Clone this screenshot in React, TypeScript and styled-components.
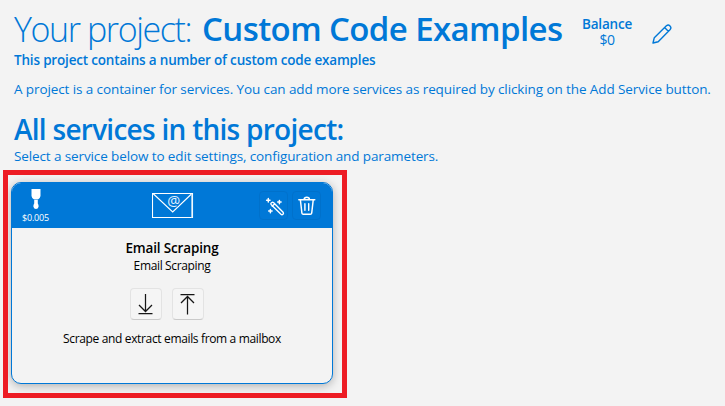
import React from "react";
import styled, { createGlobalStyle } from "styled-components";

const GlobalStyle = createGlobalStyle`
  * { box-sizing: border-box; }
  body { margin: 0; background: #f3f3f3; overflow: hidden; }
`;

const blue = "#0078d7";

const Page = styled.main`
  width: 725px;
  height: 406px;
  padding-top: 6px;
  background: #f3f3f3;
  color: ${blue};
  font-family: "Open Sans", "Noto Sans", sans-serif;
  white-space: nowrap;
`;

const TitleBar = styled.header`
  display: flex;
  height: 45px;
  padding-left: 14px;
`;

const Title = styled.h1`
  display: flex;
  margin: 0;
  font-size: 34px;
  line-height: 46px;
`;

const TitleLabel = styled.span`
  width: 188px;
  font-weight: 300;
  letter-spacing: -1.4px;
`;

const TitleName = styled.span`
  width: 366px;
  font-size: 33px;
  font-weight: 600;
  letter-spacing: -0.6px;
`;

const Balance = styled.div`
  width: 50px;
  margin-left: 14px;
  padding-top: 10px;
  text-align: center;
  font-size: 13.5px;
  line-height: 16px;
  letter-spacing: -0.2px;
`;

const BalanceLabel = styled.div`
  font-weight: 600;
`;

const BalanceValue = styled.div`
  font-size: 14px;
  letter-spacing: -0.4px;
`;

const EditButton = styled.button`
  width: 20px;
  height: 20px;
  margin: 18px 0 0 20px;
  padding: 0;
  border: 0;
  background: none;
  color: ${blue};
`;

const Line = styled.p<{ $height: number; $weight?: number; $spacing?: number }>`
  margin: 0;
  padding-left: 14px;
  height: ${(p) => p.$height}px;
  font-size: 13.5px;
  font-weight: ${(p) => p.$weight ?? 400};
  letter-spacing: ${(p) => p.$spacing ?? 0}px;
  line-height: 18px;
`;

const SectionTitle = styled.h2`
  margin: 0;
  padding-left: 14px;
  height: 38px;
  font-size: 28px;
  font-weight: 600;
  line-height: 40px;
  letter-spacing: -0.73px;
`;

const Highlight = styled.section`
  width: 344px;
  height: 228px;
  margin: 4px 0 0 3px;
  padding: 7px 9px 9px 3px;
  border: 5px solid #ed1c24;
  overflow: hidden;
`;

const Card = styled.article`
  width: 322px;
  height: 202px;
  border: 1px solid ${blue};
  border-radius: 10px;
  background: #f3f3f3;
  box-shadow: 0 2px 10px rgba(0, 0, 0, 0.28);
  color: #000;
  overflow: hidden;
`;

const CardHeader = styled.div`
  display: grid;
  grid-template-columns: 46px 1fr 73px;
  height: 45px;
  background: ${blue};
  color: #fff;
`;

const Price = styled.div`
  display: flex;
  flex-direction: column;
  align-items: center;
  padding: 6px 0 0 1px;
  font-size: 9px;
  line-height: 15px;
  letter-spacing: -0.2px;
`;

const Mail = styled.div`
  display: flex;
  padding: 9px 0 0 94px;
`;

const HeaderActions = styled.div`
  display: flex;
  gap: 4px;
  padding-top: 8px;
`;

const HeaderButton = styled.button`
  width: 29px;
  height: 29px;
  padding: 0;
  border: 1px solid #0071cb;
  border-radius: 4px;
  background: transparent;
  color: #fff;
  svg { display: block; }
`;

const CardBody = styled.div`
  display: flex;
  flex-direction: column;
  align-items: center;
  padding-top: 11px;
`;

const ServiceName = styled.div`
  font-size: 13.5px;
  font-weight: 600;
  line-height: 19px;
  letter-spacing: -0.15px;
`;

const ServiceType = styled.div`
  font-size: 12px;
  line-height: 16px;
  letter-spacing: -0.35px;
`;

const MoveButtons = styled.div`
  display: flex;
  gap: 10px;
  margin: 14px 10px 10px 0;
`;

const MoveButton = styled.button`
  width: 32px;
  height: 32px;
  padding: 0;
  border: 1px solid #e3e3e3;
  border-bottom-color: #cacaca;
  border-radius: 4px;
  background: #f5f5f5;
  svg { display: block; }
`;

const Summary = styled.div`
  font-size: 12px;
  line-height: 18px;
  letter-spacing: -0.35px;
`;

const PencilIcon = () => (
  <svg width="20" height="20" viewBox="0 0 20 20" fill="none" stroke="currentColor" strokeWidth="1.4" strokeLinejoin="round">
    <path d="M1 19 2.3 13.7 14.4 1.8Q16.3.3 18 1.9 19.7 3.7 18.2 5.5L6.2 17.7ZM12.6 3.6 16.3 7.2" />
  </svg>
);

const BrushIcon = () => (
  <svg width="10" height="21" viewBox="0 0 10 21" fill="currentColor">
    <path d="M.5 0h9v7Q9 9.5 7.3 10.3H2.7Q1 9.5.5 7ZM3.2 10.8h3.6v3.7q1 1.2.8 3.2Q7 20 5 20t-2.6-2.3q-.2-2 .8-3.2Z" />
  </svg>
);

const MailIcon = () => (
  <svg width="42" height="27" viewBox="0 0 42 27" fill="none" stroke="#fff">
    <path d="M.5 1.5h40v24H.5ZM1 1.5l19.7 18.5L40 1.5" strokeWidth="1.1" />
    <path d="M39.7 2v23.5" stroke="#b9dcf6" strokeWidth="1" />
    <circle cx="21.6" cy="9" r="6.5" fill={blue} stroke="none" />
    <text x="21.7" y="13.6" textAnchor="middle" fontFamily="Open Sans, sans-serif" fontSize="14.5" fill="#e3f2ff" stroke="none">@</text>
  </svg>
);

const WandIcon = () => (
  <svg width="27" height="27" viewBox="0 0 27 27" fill="none" stroke="currentColor" strokeWidth="1.4" strokeLinecap="round" strokeLinejoin="round">
    <path d="M10.9 11.3q1.1-1.7 2.8-.5l9.4 9.4q.8 1-.1 2-1 .9-2 .1l-9.5-9.4q-.9-.8-.6-1.6ZM12.2 14.3l2.3-2.2" />
    <path d="M8.3 6.6v3.4M6.6 8.3h3.4M19.4 8.4v3.4M17.7 10.1h3.4M10.4 17.4v3.4M8.7 19.1h3.4" strokeWidth="1.5" />
  </svg>
);

const TrashIcon = () => (
  <svg width="27" height="27" viewBox="0 0 27 27" fill="none" stroke="currentColor" strokeWidth="1.45" strokeLinecap="round" strokeLinejoin="round">
    <path d="M5.8 7.8h16M11.1 7.5q.2-2.2 2.7-2.2t2.7 2.2M7.4 8.1l1.5 13q.2 1.2 1.4 1.2h7q1.2 0 1.4-1.2l1.5-13M11.9 11.7v6.6M15.7 11.7v6.6" />
  </svg>
);

const ArrowIcon = ({ up = false }: { up?: boolean }) => (
  <svg width="30" height="30" viewBox="0 0 30 30" fill="none" stroke="#161616" strokeWidth="1.25">
    {up ? (
      <path d="M7.5 5.5h14M14.5 7.5v18M8 14 14.5 7.5 21 14" />
    ) : (
      <path d="M7.5 24.5h14M14.5 5v17.5M8 16 14.5 22.5 21 16" />
    )}
  </svg>
);

export default function App() {
  return (
    <>
      <GlobalStyle />
      <Page>
        <TitleBar>
          <Title>
            <TitleLabel>Your project:</TitleLabel>
            <TitleName>Custom Code Examples</TitleName>
          </Title>
          <Balance>
            <BalanceLabel>Balance</BalanceLabel>
            <BalanceValue>$0</BalanceValue>
          </Balance>
          <EditButton aria-label="Edit project"><PencilIcon /></EditButton>
        </TitleBar>
        <Line $height={29} $weight={600} $spacing={-0.18}>This project contains a number of custom code examples</Line>
        <Line $height={29} $spacing={-0.1}>A project is a container for services. You can add more services as required by clicking on the Add Service button.</Line>
        <SectionTitle>All services in this project:</SectionTitle>
        <Line $height={19} $spacing={-0.115}>Select a service below to edit settings, configuration and parameters.</Line>
        <Highlight>
          <Card>
            <CardHeader>
              <Price><BrushIcon /><span>$0.005</span></Price>
              <Mail><MailIcon /></Mail>
              <HeaderActions>
                <HeaderButton aria-label="Configure service"><WandIcon /></HeaderButton>
                <HeaderButton aria-label="Delete service"><TrashIcon /></HeaderButton>
              </HeaderActions>
            </CardHeader>
            <CardBody>
              <ServiceName>Email Scraping</ServiceName>
              <ServiceType>Email Scraping</ServiceType>
              <MoveButtons>
                <MoveButton aria-label="Move down"><ArrowIcon /></MoveButton>
                <MoveButton aria-label="Move up"><ArrowIcon up /></MoveButton>
              </MoveButtons>
              <Summary>Scrape and extract emails from a mailbox</Summary>
            </CardBody>
          </Card>
        </Highlight>
      </Page>
    </>
  );
}
